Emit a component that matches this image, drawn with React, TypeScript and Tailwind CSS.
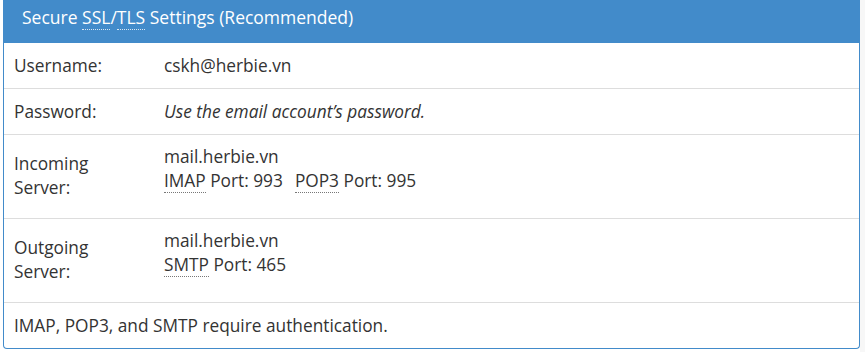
import React from 'react';

const font = { fontFamily: '"Open Sans", "Noto Sans", sans-serif' };

function Abbr({ children, light }: { children: React.ReactNode; light?: boolean }) {
  return (
    <abbr
      className={`border-b border-dotted ${light ? 'border-[#d9e6f2]' : 'border-[#777]'}`}
      style={{ textDecoration: 'none' }}
    >
      {children}
    </abbr>
  );
}

function Row({ label, children }: { label: React.ReactNode; children: React.ReactNode }) {
  return (
    <div className="flex border-b border-[#ddd] pt-[11px] pb-[10px]">
      <div className="w-[160px] pl-[10px]">{label}</div>
      <div className="flex-1">{children}</div>
    </div>
  );
}

function ServerRow({ label, children }: { label: React.ReactNode; children: React.ReactNode }) {
  return (
    <div className="flex border-b border-[#ddd]">
      <div className="w-[160px] pl-[10px] self-center pb-[2px]">{label}</div>
      <div className="flex-1 pt-[10px] pb-[25px]">{children}</div>
    </div>
  );
}

export default function App() {
  return (
    <div className="flex w-[865px] h-[352px] bg-white" style={font}>
      <div className="w-[3px]" />
      <div className="w-[857px] h-[349px] border border-t-0 border-[#428bca] rounded-b-[4px] text-[17.3px] leading-[24px] text-[#333] overflow-hidden">
        <div className="h-[43px] bg-[#428bca] text-white pt-[5px] pl-[18px] text-[17.5px]">
          Secure <Abbr light>SSL</Abbr>/<Abbr light>TLS</Abbr> Settings (Recommended)
        </div>

        <Row label="Username:">cskh@herbie.vn</Row>
        <Row label="Password:">
          <span className="italic">Use the email account’s password.</span>
        </Row>

        <ServerRow label={<>Incoming<br />Server:</>}>
          <div>mail.herbie.vn</div>
          <div>
            <Abbr>IMAP</Abbr> Port: 993
            <span className="inline-block w-[12px]" />
            <Abbr>POP3</Abbr> Port: 995
          </div>
        </ServerRow>

        <ServerRow label={<>Outgoing<br />Server:</>}>
          <div>mail.herbie.vn</div>
          <div>
            <Abbr>SMTP</Abbr> Port: 465
          </div>
        </ServerRow>

        <div className="pt-[11px] pb-[10px] pl-[10px]">
          IMAP, POP3, and SMTP require authentication.
        </div>
      </div>
      <div className="flex-1 bg-[#f7f7f7]" />
    </div>
  );
}
